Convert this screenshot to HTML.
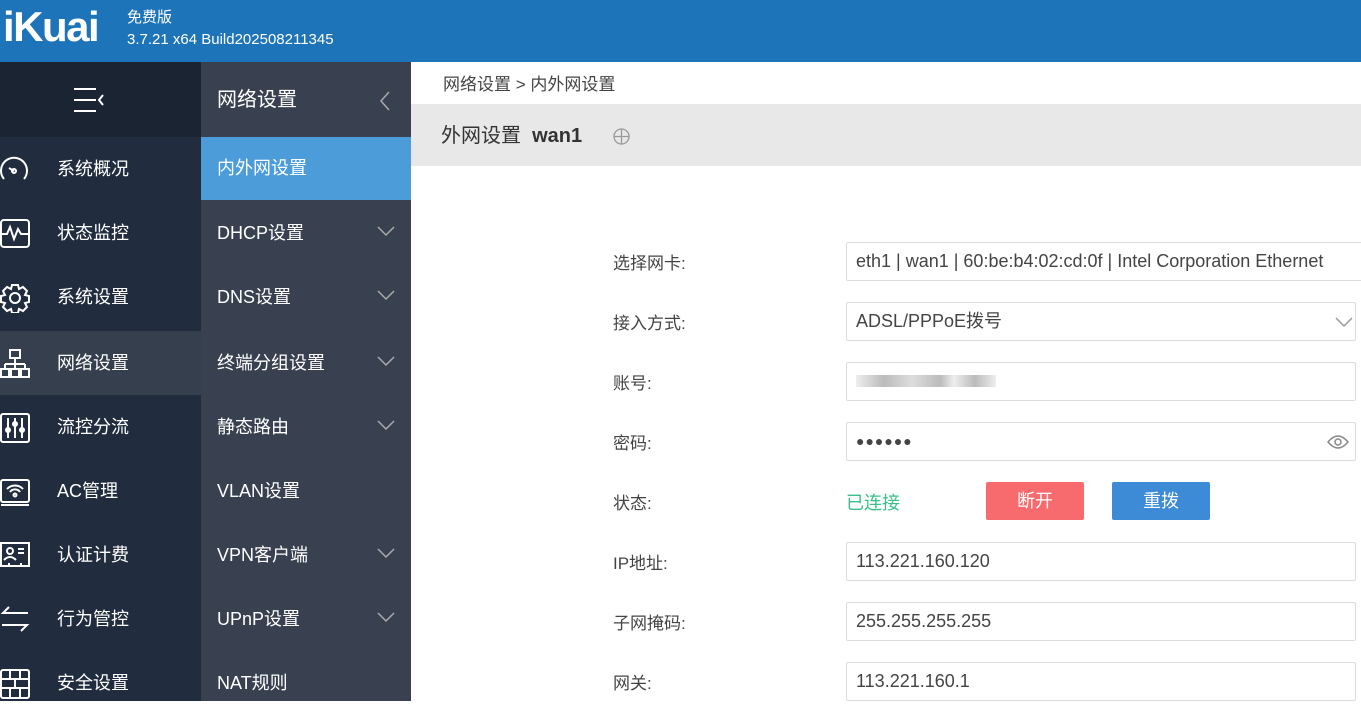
<!DOCTYPE html>
<html><head><meta charset="utf-8"><style>
*{margin:0;padding:0;box-sizing:border-box}
body{width:1361px;height:701px;overflow:hidden;background:#fff;font-family:"Liberation Sans","Noto Sans CJK SC",sans-serif;position:relative}
.hdr{position:absolute;left:0;top:0;width:1361px;height:62px;background:#1e74b8;color:#fff}
.logo{position:absolute;left:3px;top:3px;font-size:42px;font-weight:bold;letter-spacing:-1.5px;font-family:"Liberation Sans",sans-serif}
.ver{position:absolute;left:127px;top:7px;font-size:15px;line-height:22px}
.c1{position:absolute;left:0;top:62px;width:201px;height:639px;background:#212c3e}
.c1top{height:75px;background:#1b2433;position:relative}
.c2{position:absolute;left:201px;top:62px;width:210px;height:639px;background:#394150}
.it{position:absolute;left:0;height:64px;width:100%;color:#fff;font-size:18px;line-height:64px}
.c1 .it span{position:absolute;left:57px}
.c2 .it span{position:absolute;left:16px}
.ic{position:absolute;left:0;top:18px}
.chev{position:absolute;right:16px;top:24px}
.main{position:absolute;left:411px;top:62px;width:950px;height:639px}
.bc{position:absolute;left:32px;top:8px;font-size:17px;color:#444}
.band{position:absolute;left:0;top:42px;width:950px;height:62px;background:#e8e8e8}
.band .t{position:absolute;left:30px;top:15px;font-size:20px;color:#333}
.lab{position:absolute;left:202px;font-size:17px;color:#444}
.inp{position:absolute;left:435px;width:510px;height:39px;border:1px solid #dcdcdc;border-radius:2px;font-size:18px;color:#444;padding-left:9px;line-height:37px;white-space:nowrap;overflow:hidden}
.btn{position:absolute;top:420px;width:98px;height:38px;border-radius:2px;color:#fff;font-size:18px;text-align:center;line-height:38px}
</style></head><body>
<div class="hdr"><div class="logo">iKuai</div><div class="ver">免费版<br>3.7.21 x64 Build202508211345</div></div>
<div class="c1">
<div class="c1top"><svg style="position:absolute;left:73px;top:24px" width="32" height="28" stroke="#fff" stroke-width="2" fill="none"><path d="M1 3h22M1 14h22M1 25h22M30 9l-4 5 4 5"/></svg></div>
<div class="it" style="top:75px"><svg class="ic" width="30" height="28" stroke="#fff" stroke-width="2" fill="none"><path d="M4 24A13 13 0 1 1 24 24M14 16l-5-3"/><circle cx="14" cy="16" r="2"/></svg><span>系统概况</span></div>
<div class="it" style="top:139px"><svg class="ic" width="30" height="30" stroke="#fff" stroke-width="2" fill="none"><rect x="1" y="1" width="28" height="27" rx="3"/><path d="M1 15h6l3-7 4 12 4-10 3 5h8"/></svg><span>状态监控</span></div>
<div class="it" style="top:203px"><svg class="ic" width="30" height="30" stroke="#fff" stroke-width="2" fill="none"><circle cx="15" cy="15" r="5"/><path d="M12 2h6l1 4 4-2 4 4-2 4 4 1v6l-4 1 2 4-4 4-4-2-1 4h-6l-1-4-4 2-4-4 2-4-4-1v-6l4-1-2-4 4-4 4 2z"/></svg><span>系统设置</span></div>
<div class="it" style="top:269px;background:#363f4e"><svg class="ic" width="30" height="30" stroke="#fff" stroke-width="2" fill="none"><rect x="10" y="1" width="10" height="8"/><path d="M15 9v6M5 15h20M5 15v5M15 15v5M25 15v5"/><rect x="1" y="20" width="8" height="8"/><rect x="11" y="20" width="8" height="8"/><rect x="21" y="20" width="8" height="8"/></svg><span>网络设置</span></div>
<div class="it" style="top:333px"><svg class="ic" width="30" height="30" stroke="#fff" stroke-width="2" fill="none"><rect x="1" y="1" width="28" height="28" rx="2"/><path d="M8 5v20M15 5v20M22 5v20"/><circle cx="8" cy="17" r="2"/><circle cx="15" cy="11" r="2"/><circle cx="22" cy="17" r="2"/></svg><span>流控分流</span></div>
<div class="it" style="top:397px"><svg class="ic" width="30" height="30" stroke="#fff" stroke-width="2" fill="none"><rect x="1" y="3" width="28" height="22" rx="2"/><path d="M1 28h28M7 12a11 11 0 0 1 16 0M10 15a6 6 0 0 1 10 0"/><circle cx="15" cy="18" r="1.5"/></svg><span>AC管理</span></div>
<div class="it" style="top:461px"><svg class="ic" width="30" height="30" stroke="#fff" stroke-width="2" fill="none"><path d="M5 25H1V2h28v23h-4"/><circle cx="10" cy="10" r="3"/><path d="M4 19q6-6 12 0M18 8h6M18 12h6M5 25h20M9 22v4M21 22v4"/></svg><span>认证计费</span></div>
<div class="it" style="top:525px"><svg class="ic" width="30" height="30" stroke="#fff" stroke-width="2" fill="none"><path d="M28 8H3l6-6M2 20h25l-6 6"/></svg><span>行为管控</span></div>
<div class="it" style="top:589px"><svg class="ic" width="30" height="30" stroke="#fff" stroke-width="2" fill="none"><rect x="1" y="1" width="28" height="28" rx="2"/><path d="M1 10h28M1 19h28M10 1v9M20 1v9M15 10v9M10 19v10M20 19v10"/></svg><span>安全设置</span></div>
</div>
<div class="c2">
<div class="it" style="top:6px;font-size:20px"><span>网络设置</span><svg class="chev" style="top:22px;right:20px" width="12" height="22" stroke="#aaa" stroke-width="1.5" fill="none"><path d="M10 2 2 11l8 9"/></svg></div>
<div class="it" style="top:75px;height:63px;line-height:63px;background:#4b9cd9"><span>内外网设置</span></div>
<div class="it" style="top:139px"><span>DHCP设置</span><svg class="chev" width="18" height="12" stroke="#aaa" stroke-width="1.5" fill="none"><path d="M1 2l8 8 8-8"/></svg></div>
<div class="it" style="top:203px"><span>DNS设置</span><svg class="chev" width="18" height="12" stroke="#aaa" stroke-width="1.5" fill="none"><path d="M1 2l8 8 8-8"/></svg></div>
<div class="it" style="top:269px"><span>终端分组设置</span><svg class="chev" width="18" height="12" stroke="#aaa" stroke-width="1.5" fill="none"><path d="M1 2l8 8 8-8"/></svg></div>
<div class="it" style="top:333px"><span>静态路由</span><svg class="chev" width="18" height="12" stroke="#aaa" stroke-width="1.5" fill="none"><path d="M1 2l8 8 8-8"/></svg></div>
<div class="it" style="top:397px"><span>VLAN设置</span></div>
<div class="it" style="top:461px"><span>VPN客户端</span><svg class="chev" width="18" height="12" stroke="#aaa" stroke-width="1.5" fill="none"><path d="M1 2l8 8 8-8"/></svg></div>
<div class="it" style="top:525px"><span>UPnP设置</span><svg class="chev" width="18" height="12" stroke="#aaa" stroke-width="1.5" fill="none"><path d="M1 2l8 8 8-8"/></svg></div>
<div class="it" style="top:589px"><span>NAT规则</span></div>
</div>
<div class="main">
<div class="bc">网络设置 &gt; 内外网设置</div>
<div class="band"><div class="t">外网设置 &nbsp;<b style="font-size:20px">wan1</b></div>
<svg style="position:absolute;left:202px;top:24px" width="17" height="17" stroke="#999" stroke-width="1.3" fill="none"><circle cx="8.5" cy="8.5" r="7.5"/><path d="M1 8.5h15M8.5 1v15"/></svg></div>
<div class="lab" style="top:187px">选择网卡:</div>
<div class="inp" style="top:180px;width:520px;border-right:none">eth1 | wan1 | 60:be:b4:02:cd:0f | Intel Corporation Ethernet</div>
<div class="lab" style="top:247px">接入方式:</div>
<div class="inp" style="top:240px">ADSL/PPPoE拨号<svg style="position:absolute;right:2px;top:14px" width="18" height="11" stroke="#999" stroke-width="1.5" fill="none"><path d="M1 1l8 8 8-8"/></svg></div>
<div class="lab" style="top:307px">账号:</div>
<div class="inp" style="top:300px"><span style="display:inline-block;margin-top:12px;width:140px;height:12px;background:linear-gradient(90deg,#eee,#bbb 20%,#ddd 40%,#bbb 60%,#eee 70%,#bbb 85%,#eee)"></span></div>
<div class="lab" style="top:367px">密码:</div>
<div class="inp" style="top:360px;font-size:14px;letter-spacing:1px">●●●●●●<svg style="position:absolute;right:6px;top:12px" width="22" height="14" stroke="#888" stroke-width="1.5" fill="none"><path d="M1 7q10-12 20 0q-10 12-20 0z"/><circle cx="11" cy="7" r="3"/></svg></div>
<div class="lab" style="top:427px">状态:</div>
<div style="position:absolute;left:435px;top:427px;font-size:18px;color:#3cc08a">已连接</div>
<div class="btn" style="left:575px;background:#f76b6f">断开</div>
<div class="btn" style="left:701px;background:#3d8ad6">重拨</div>
<div class="lab" style="top:487px">IP地址:</div>
<div class="inp" style="top:480px">113.221.160.120</div>
<div class="lab" style="top:547px">子网掩码:</div>
<div class="inp" style="top:540px">255.255.255.255</div>
<div class="lab" style="top:607px">网关:</div>
<div class="inp" style="top:600px">113.221.160.1</div>
</div>
</body></html>
